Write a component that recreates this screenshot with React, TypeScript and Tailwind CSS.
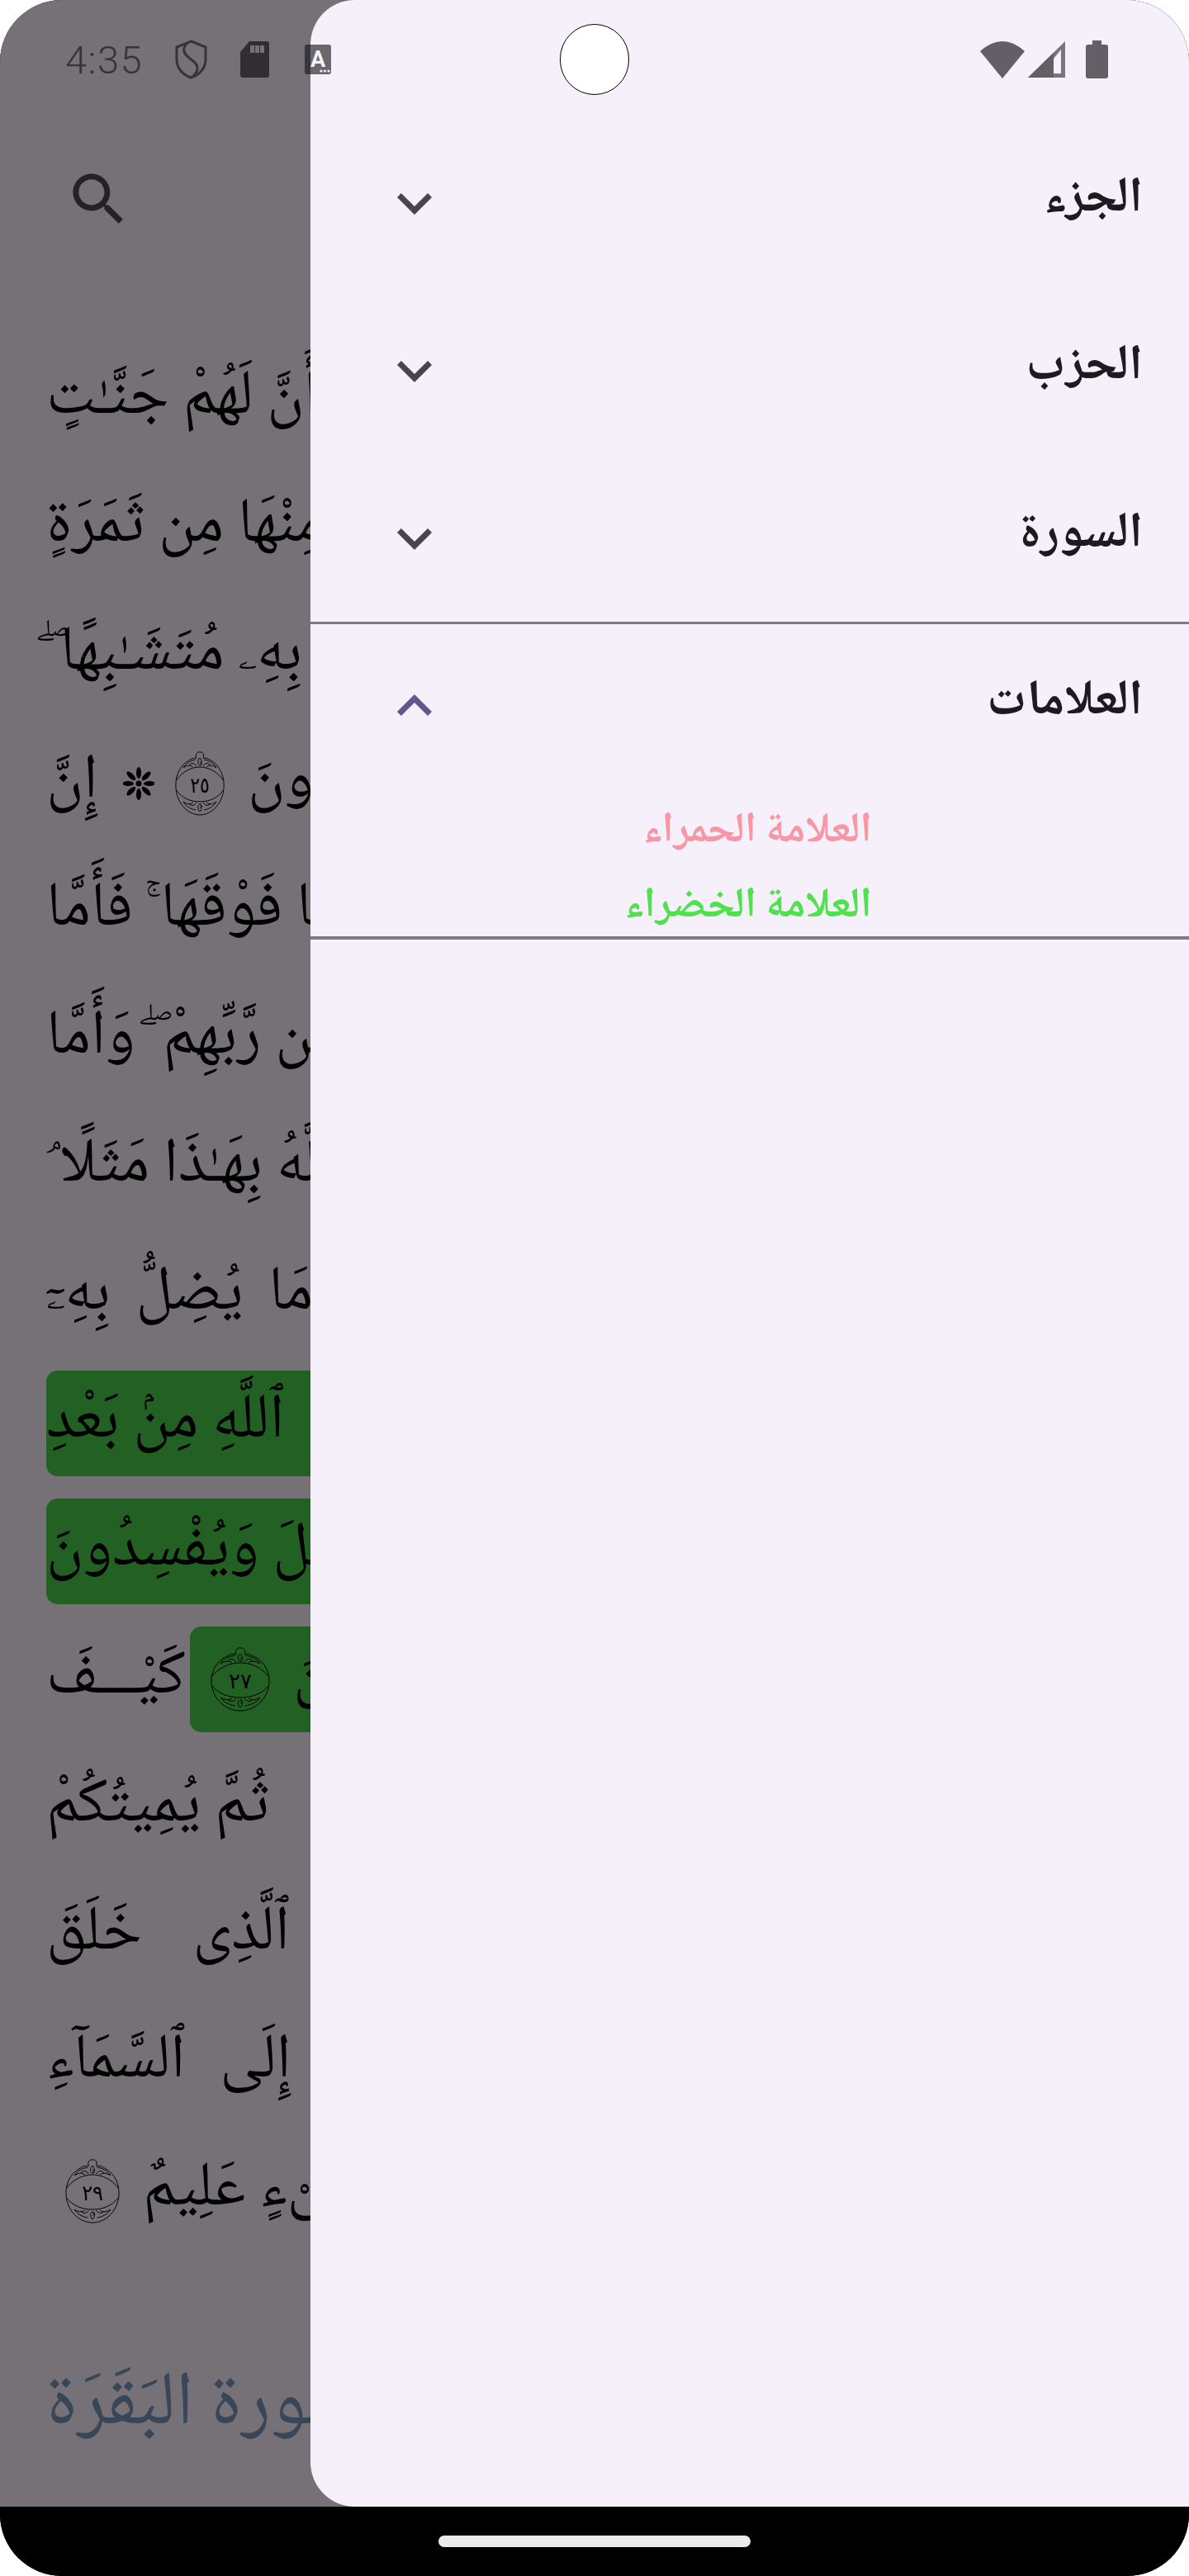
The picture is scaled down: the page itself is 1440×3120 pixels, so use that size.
import React from "react";

const font = "font-['Noto_Naskh_Arabic','Amiri','DejaVu_Sans',sans-serif]";

function Medallion({ num, w = 72, h = 78, className = "" }: { num: string; w?: number; h?: number; className?: string }) {
  return (
    <svg width={w} height={h} viewBox="0 0 72 78" preserveAspectRatio="none" className={`shrink-0 ${className}`} fill="none" stroke="#000" strokeWidth="1">
      <path d="M36 1c-4-1-7 3-5 7-4 0-8 1-11 3C9 16 1 27 1 41c0 20 16 36 35 36s35-16 35-36C71 27 63 16 52 11c-3-2-7-3-11-3 2-4-1-8-5-7z" />
      <path d="M2 35c8-10 21-16 34-16s26 6 34 16" />
      <path d="M2 47c8 10 21 14 34 14s26-4 34-14" />
      <path d="M36 8c-3 2-4 8 0 9 3 0 3-4 0-4M36 8c3 2 4 8 0 9" />
      <path d="M30 10c-7 1-14 4-18 10 5-3 10-4 14-1M42 10c7 1 14 4 18 10-5-3-10-4-14-1" />
      <path d="M31 18c-3-5-9-4-10-1M41 18c3-5 9-4 10-1" />
      <path d="M36 73c-3-2-4-8 0-9 3 0 3 4 0 4M36 73c3-2 4-8 0-9" />
      <path d="M30 71c-7-1-14-4-18-10 5 3 10 4 14 1M42 71c7-1 14-4 18-10-5 3-10 4-14 1" />
      <path d="M31 62c-3 5-9 4-10 1M41 62c3 5 9 4 10 1" />
      <text x="36" y="50" textAnchor="middle" fontSize="26" fill="#000" stroke="none" fontFamily="DejaVu Sans">{num}</text>
    </svg>
  );
}

function Flower() {
  const angles = [0, 45, 90, 135, 180, 225, 270, 315];
  return (
    <svg width="38" height="42" viewBox="0 0 38 42" className="shrink-0">
      <circle cx="19" cy="21" r="3.500" fill="#000" />
      {angles.map((a) => (
        <ellipse key={a} cx="19" cy="8" rx="3" ry="7" fill="#000" transform={`rotate(${a} 19 21)`} />
      ))}
    </svg>
  );
}

function Line({ children, green, className = "" }: { children: React.ReactNode; green?: boolean; className?: string }) {
  return (
    <div className="h-[155px] shrink-0 flex items-center">
      <div
        dir="rtl"
        className={`flex items-center justify-end whitespace-pre text-[76px] leading-none text-black ${
          green ? "bg-[#236024] rounded-[14px] h-[128px] w-[400px]" : ""
        } ${className}`}
      >
        {children}
      </div>
    </div>
  );
}

function Chevron({ up }: { up?: boolean }) {
  return (
    <svg width="84" height="84" viewBox="0 0 24 24" className={up ? "fill-[#65558f]" : "fill-[#49454f]"}>
      <path d={up ? "M12 8l-6 6 1.41 1.41L12 10.83l4.59 4.58L18 14z" : "M16.59 8.59L12 13.17 7.41 8.59 6 10l6 6 6-6z"} />
    </svg>
  );
}

function Row({ label, up }: { label: string; up?: boolean }) {
  return (
    <div className={`${up ? "h-[198px]" : "h-[203px]"} shrink-0 flex items-center justify-between pl-[84px] pr-[56px]`}>
      <Chevron up={up} />
      <span className="text-[60px] leading-none font-bold text-[#1d1b20] mb-[6px]">{label}</span>
    </div>
  );
}

export default function App() {
  return (
    <div className="w-[1440px] h-[3120px] bg-white">
      <div className={`relative w-full h-full overflow-hidden rounded-[75px] bg-black flex flex-col ${font}`}>
        <div className="h-[3036px] bg-[#757176] pl-[56px] flex flex-col relative overflow-hidden">
          <div className="h-[406px] shrink-0" />
          <Line>ٱلصَّـٰلِحَـٰتِ أَنَّ لَهُمْ جَنَّـٰتٍ</Line>
          <Line>مِنْهَا مِن ثَمَرَةٍ</Line>
          <Line>وَأُتُوا۟ بِهِۦ مُتَشَـٰبِهًا ۖ</Line>
          <Line>
            <span>خَـٰلِدُونَ</span>
            <Medallion num="٢٥" w={60} h={78} className="ml-[25px] mr-[28px]" />
            <Flower />
            <span className="w-[93px] text-left">إِنَّ</span>
          </Line>
          <Line>بَعُوضَةً فَمَا فَوْقَهَا ۚ فَأَمَّا</Line>
          <Line>مِن رَّبِّهِمْ ۖ وَأَمَّا</Line>
          <Line>ٱللَّهُ بِهَـٰذَا مَثَلًا ۘ</Line>
          <Line className="[word-spacing:14px]">كَثِيرًا وَمَا يُضِلُّ بِهِۦٓ</Line>
          <Line green>ٱللَّهِ مِنۢ بَعْدِ</Line>
          <Line green>يُوصَلَ وَيُفْسِدُونَ</Line>
          <Line>
            <div className="flex items-center justify-end shrink-0 bg-[#236024] rounded-[14px] h-[128px] w-[200px] mr-[4px]" dir="rtl">
              <span className="mr-[34px]">ٱلْخَـٰسِرُونَ</span>
              <Medallion num="٢٧" className="ml-[25px] mr-[28px]" />
            </div>
            <span className="w-[174px] text-left">كَيْـــفَ</span>
          </Line>
          <Line>ثُمَّ يُمِيتُكُمْ</Line>
          <Line className="[word-spacing:45px]">ٱلَّذِى خَلَقَ</Line>
          <Line className="[word-spacing:25px]">إِلَى ٱلسَّمَآءِ</Line>
          <Line>
            <span>شَىْءٍ عَلِيمٌ</span>
            <Medallion num="٢٩" w={66} h={78} className="mr-[28px] ml-[23px]" />
          </Line>
          <div dir="rtl" className="self-start text-[#384658] text-[92px] leading-none whitespace-pre mt-[138px]">سورة البَقَرَة</div>
        </div>
        <div className="flex-1 bg-black flex items-center justify-center">
          <div className="w-[378px] h-[14px] rounded-[7px] bg-[#ebebeb]" />
        </div>
        <div className="absolute left-[376px] right-0 top-0 h-[3036px] bg-[#f5f0f9] rounded-l-[54px] flex flex-col pt-[144px]">
          <Row label="الجزء" />
          <Row label="الحزب" />
          <Row label="السورة" />
          <div className="h-[3px] bg-[#7f7a80] shrink-0" />
          <Row label="العلامات" up />
          <div className="flex flex-col items-center pt-[24px] h-[180px] shrink-0">
            <div dir="rtl" className="flex flex-col items-start w-[296px] text-[51px] font-bold">
              <div className="h-[60px] leading-[60px] whitespace-pre text-[#f896a6]">العلامة الحمراء</div>
              <div className="h-[60px] leading-[60px] mt-[31px] whitespace-pre text-[#50e050]">العلامة الخضراء</div>
            </div>
          </div>
          <div className="h-[4px] bg-[#7f7a80] shrink-0" />
        </div>

        {/* status bar */}
        <div className="absolute top-0 left-0 right-0 h-[144px] flex items-center pl-[79px] pr-[98px]">
          <span className="w-[93px] font-['Roboto',sans-serif] font-light text-[47px] tracking-[1.5px] leading-none text-[#36343a]">4:35</span>
          <svg width="39" height="48" viewBox="0 0 39 48" className="ml-[40px]" fill="none" stroke="#36343a" strokeWidth="3">
            <path d="M19.5 2 37 9v15c0 11-8 19-17.500 22C10 43 2 35 2 24V9z" />
            <path d="M14 5C6 14 14 20 22 26c8 6 6 14-2.500 20" />
          </svg>
          <svg width="35" height="44" viewBox="0 0 35 44" className="ml-[40px]">
            <path d="M11 0h21a3 3 0 0 1 3 3v38a3 3 0 0 1-3 3H3a3 3 0 0 1-3-3V13z" fill="#302e32" />
            <path d="M12 5h5v9h-5zM18 5h5v9h-5zM24 5h5v9h-5z" fill="#757176" />
          </svg>
          <svg width="32" height="36" viewBox="0 0 32 36" className="ml-[43px]">
            <rect width="32" height="36" rx="3" fill="#6b676e" />
            <path d="M7 0H3a3 3 0 0 0-3 3v30a3 3 0 0 0 3 3h4z" fill="#38363a" />
            <text x="16" y="27" textAnchor="middle" fontSize="27" fontWeight="700" fill="#f5f0f9" fontFamily="Roboto">A</text>
            <circle cx="20" cy="32" r="1.600" fill="#f5f0f9" />
            <circle cx="24.500" cy="32" r="1.600" fill="#f5f0f9" />
            <circle cx="29" cy="32" r="1.600" fill="#f5f0f9" />
          </svg>
          <div className="flex-1" />
          <svg width="54" height="45" viewBox="0 0 54 45" fill="#625f66">
            <path d="M27 45 0 12Q27-12 54 12z" />
          </svg>
          <svg width="45" height="44" viewBox="0 0 45 44" className="ml-[4px]">
            <path d="M45 0v44H0z" fill="#79767b" />
            <path d="M31 14 0 44h31z" fill="#625f66" />
            <path d="M31 21 40 10v29h-9z" fill="#f5f0f9" />
          </svg>
          <svg width="27" height="46" viewBox="0 0 27 46" className="ml-[25px]" fill="#625f66">
            <path d="M8 0h11v5h5a3 3 0 0 1 3 3v35a3 3 0 0 1-3 3H3a3 3 0 0 1-3-3V8a3 3 0 0 1 3-3h5z" />
          </svg>
        </div>

        {/* camera cutout */}
        <div className="absolute left-[678px] top-[29px] w-[84px] h-[86px] rounded-full bg-white border-[1.5px] border-black" />

        {/* search button */}
        <svg width="83" height="83" viewBox="0 0 24 24" className="absolute left-[78px] top-[200px] fill-[#242226]">
          <path d="M15.5 14h-.79l-.28-.27C15.41 12.590 16 11.110 16 9.500 16 5.910 13.090 3 9.500 3S3 5.910 3 9.500 5.910 16 9.500 16c1.610 0 3.090-.59 4.230-1.570l.27.28v.79l5 4.990L20.490 19l-4.990-5zm-6 0C7.010 14 5 11.990 5 9.500S7.010 5 9.500 5 14 7.010 14 9.500 11.990 14 9.500 14z" />
        </svg>
      </div>
    </div>
  );
}
